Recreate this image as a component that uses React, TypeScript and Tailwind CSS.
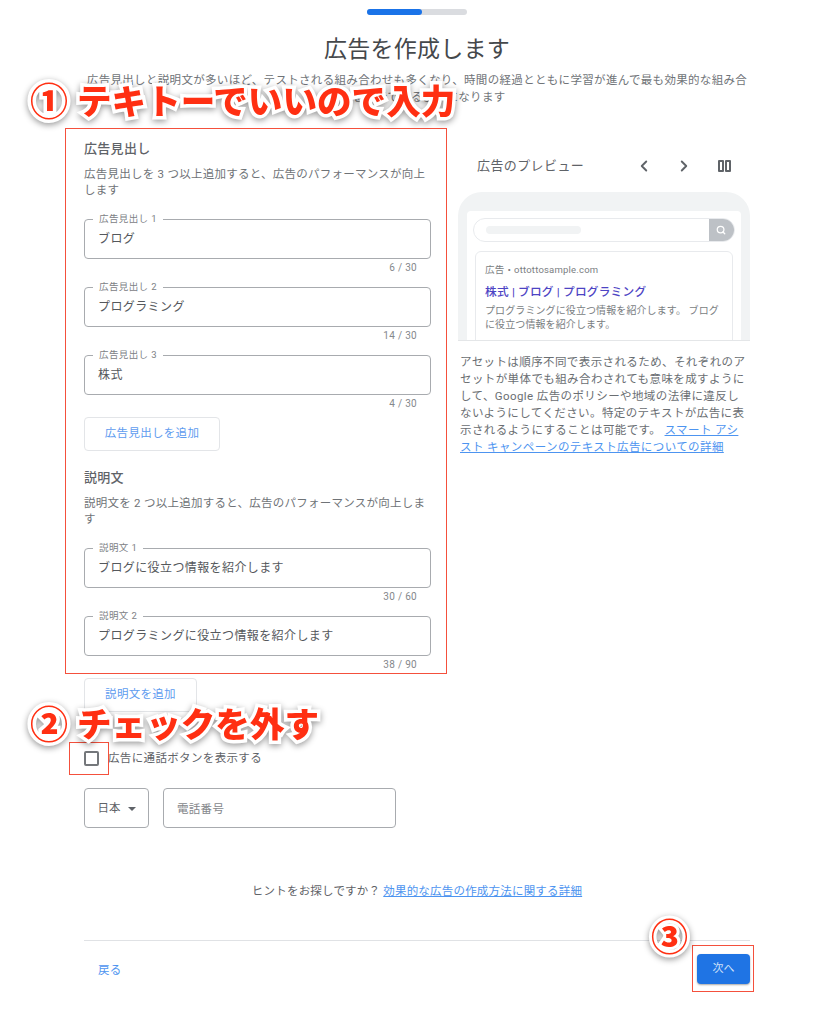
import { ChevronLeft, ChevronRight, Search } from 'lucide-react'

const FONT = "font-['Roboto','Noto_Sans_CJK_JP',sans-serif]"

function Field({ label, value, count }: { label: string; value: string; count: string }) {
  return (
    <div>
      <div className="relative flex h-10 items-center rounded border-[1.5px] border-[#a8abaf] px-[13px] text-[12px] tracking-[0.4px] text-[#55585c]">
        <span className="absolute -top-[7px] left-2 bg-white px-[6px] text-[9.5px] leading-3 tracking-[0.4px] text-[#7d8185]">
          {label}
        </span>
        {value}
      </div>
      <div className="h-7 pt-px pr-[14px] text-right text-[10px] leading-4 tracking-[0.3px] text-[#85888c]">{count}</div>
    </div>
  )
}

function OutlineButton({ label, width }: { label: string; width: string }) {
  return (
    <button
      type="button"
      className={`flex h-[34px] items-center justify-center rounded border border-[#e3e5e8] bg-white text-[11.5px] tracking-[0.3px] text-[#5f9cef] ${width}`}
    >
      {label}
    </button>
  )
}

function Annotation({ mark, text, className }: { mark: string; text: string; className: string }) {
  return (
    <div
      className={`absolute flex items-center whitespace-nowrap font-black text-[#ff2f12] [-webkit-text-stroke:7px_white] [paint-order:stroke_fill] [filter:drop-shadow(0_2px_3px_rgba(0,0,0,0.4))] ${className}`}
    >
      <span className="w-[47px] text-[38px] leading-none">{mark}</span>
      <span className="text-[34.6px] leading-none">{text}</span>
    </div>
  )
}

export default function App() {
  return (
    <div className={`relative h-[1024px] w-[826px] overflow-hidden bg-white text-[#5f6368] ${FONT}`}>
      <div className="ml-[84px] w-[666px]">
        {/* Progress */}
        <div className="flex justify-center pt-[9px]">
          <div className="h-[6px] w-[100px] rounded-full bg-[#dadce0]">
            <div className="h-[6px] w-[55px] rounded-full bg-[#1a73e8]" />
          </div>
        </div>

        <h1 className="mt-[20px] text-center text-[23px] leading-[30px] tracking-[0.25px] text-[#45484b]">
          広告を作成します
        </h1>

        <p className="mt-[7px] text-center text-[11.5px] leading-[17px] tracking-[0.32px] text-[#707478]">
          広告見出しと説明文が多いほど、テストされる組み合わせも多くなり、時間の経過とともに学習が進んで最も効果的な組み合わせを表示できるようになります
        </p>

        <div className="mt-[33px] flex">
          {/* Left column */}
          <div className="w-[347px] shrink-0">
            <h2 className="text-[13px] leading-5 font-medium tracking-[0.3px] text-[#5f6368]">広告見出し</h2>
            <p className="mt-[7px] text-[11.5px] leading-4 tracking-[0.25px] text-[#6f7377]">
              広告見出しを 3 つ以上追加すると、広告のパフォーマンスが向上します
            </p>
            <div className="mt-[21px]">
              <Field label="広告見出し 1" value="ブログ" count="6 / 30" />
              <Field label="広告見出し 2" value="プログラミング" count="14 / 30" />
              <Field label="広告見出し 3" value="株式" count="4 / 30" />
            </div>
            <div className="mt-[-6px]">
              <OutlineButton label="広告見出しを追加" width="w-[136px]" />
            </div>
            <h2 className="mt-[17px] text-[13px] leading-5 font-medium tracking-[0.3px] text-[#5f6368]">説明文</h2>
            <p className="mt-[7px] text-[11.5px] leading-4 tracking-[0.25px] text-[#6f7377]">
              説明文を 2 つ以上追加すると、広告のパフォーマンスが向上します
            </p>
            <div className="mt-[21px]">
              <Field label="説明文 1" value="ブログに役立つ情報を紹介します" count="30 / 60" />
              <Field label="説明文 2" value="プログラミングに役立つ情報を紹介します" count="38 / 90" />
            </div>
            <div className="mt-[-6px]">
              <OutlineButton label="説明文を追加" width="w-[113px]" />
            </div>

            <label className="mt-[38px] flex items-center gap-[9px]">
              <span className="h-[15px] w-[15px] rounded-[2px] border-2 border-[#74777b]" />
              <span className="text-[11.5px] leading-4 tracking-[0.35px] text-[#5f6368]">広告に通話ボタンを表示する</span>
            </label>

            <div className="mt-[22px] flex gap-[14px]">
              <div className="flex h-10 w-[65px] items-center justify-center gap-[7px] rounded border-[1.5px] border-[#a8abaf] pt-[2px] text-[11.5px] text-[#5f6368]">
                日本
                <span className="h-0 w-0 border-x-[4px] border-t-[4px] border-x-transparent border-t-[#5f6368]" />
              </div>
              <div className="flex h-10 w-[233px] items-center rounded border-[1.5px] border-[#a8abaf] px-[13px] pt-[4px] text-[11.5px] tracking-[0.3px] text-[#85888c]">
                電話番号
              </div>
            </div>
          </div>

          {/* Preview column */}
          <div className="ml-[27px] w-[292px] shrink-0">
            <div className="mt-[17px] flex h-[20px] items-center pl-[19px]">
              <span className="w-[150px] text-[13px] tracking-[0.4px] text-[#5f6368]">広告のプレビュー</span>
              <ChevronLeft className="ml-[8px] h-[18px] w-[18px] text-[#5f6368]" strokeWidth={2.5} />
              <ChevronRight className="ml-[22px] h-[18px] w-[18px] text-[#5f6368]" strokeWidth={2.5} />
              <span className="ml-[25px] flex gap-[1px]">
                <span className="h-3 w-[6px] rounded-[1px] border-2 border-[#5f6368]" />
                <span className="h-3 w-[6px] rounded-[1px] border-2 border-[#5f6368]" />
              </span>
            </div>

            <div className="mt-[16px] h-[149px] overflow-hidden rounded-t-[24px] border-b border-[#e4e6e8] bg-[#f1f3f4] px-[9px] pt-[19px]">
              <div className="h-full rounded-t-[4px] bg-white px-[6px] pt-[7px]">
                <div className="flex h-6 items-center overflow-hidden rounded-full border border-[#e8eaed]">
                  <div className="ml-3 h-2 w-[95px] rounded-sm bg-[#f1f3f4]" />
                  <div className="ml-auto flex h-6 w-[25px] items-center justify-center bg-[#bdc1c6] pr-[2px]">
                    <Search className="h-[10px] w-[10px] text-white" strokeWidth={3} />
                  </div>
                </div>
                <div className="mx-[2px] mt-[9px] h-[100px] rounded-t-md border border-[#e8eaed] px-[9px] pt-[10px]">
                  <div className="text-[9.5px] leading-4 tracking-[0.2px] text-[#7a7e82]">広告・ottottosample.com</div>
                  <div className="mt-[5px] text-[11.7px] leading-[18px] font-medium tracking-[0.2px] text-[#4d44c4]">
                    株式 | ブログ | プログラミング
                  </div>
                  <div className="mt-[3px] text-[10px] leading-[14px] tracking-[0.1px] text-[#7a7e82]">
                    プログラミングに役立つ情報を紹介します。 ブログに役立つ情報を紹介します。
                  </div>
                </div>
              </div>
            </div>

            <p className="mt-[13px] pl-[2px] text-[11.5px] leading-[17px] tracking-[0.4px] text-[#6a6e72]">
              アセットは順序不同で表示されるため、それぞれのアセットが単体でも組み合わされても意味を成すようにして、Google 広告のポリシーや地域の法律に違反しないようにしてください。特定のテキストが広告に表示されるようにすることは可能です。{' '}
              <a className="text-[#4d94f0] underline">スマート アシスト キャンペーンのテキスト広告についての詳細</a>
            </p>
          </div>
        </div>

        <p className="mt-[55px] text-center text-[11.5px] leading-4 tracking-[0.2px] text-[#5f6368]">
          ヒントをお探しですか？ <a className="text-[#4d94f0] underline">効果的な広告の作成方法に関する詳細</a>
        </p>

        <div className="mt-[41px] flex items-center justify-between border-t border-[#e0e2e5] pt-[13px]">
          <a className="pl-[14px] pt-[3px] text-[11.5px] tracking-[0.3px] text-[#4d94f0]">戻る</a>
          <button
            type="button"
            className="flex h-[30px] w-[53px] items-center justify-center rounded bg-[#1f74e4] text-[11px] text-[#cfe0f8] shadow-[0_1px_2px_rgba(0,0,0,0.35)]"
          >
            次へ
          </button>
        </div>
      </div>

      {/* Screenshot annotations drawn on top */}
      <div className="absolute top-[128px] left-[65px] h-[546px] w-[382px] border-[1.5px] border-[#f4503c]" />
      <div className="absolute top-[742px] left-[69px] h-[33px] w-[40px] border-[1.5px] border-[#f4503c]" />
      <div className="absolute top-[945px] left-[692px] h-[47px] w-[62px] border-[1.5px] border-[#f4503c]" />
      <Annotation mark="①" text="テキトーでいいので入力" className="top-[83px] left-[30px]" />
      <Annotation mark="②" text="チェックを外す" className="top-[706px] left-[30px]" />
      <div className="absolute top-[920px] left-[651px] text-[37px] leading-none font-black text-[#ff2f12] [-webkit-text-stroke:6px_white] [paint-order:stroke_fill] [filter:drop-shadow(0_2px_3px_rgba(0,0,0,0.4))]">
        ③
      </div>
    </div>
  )
}
